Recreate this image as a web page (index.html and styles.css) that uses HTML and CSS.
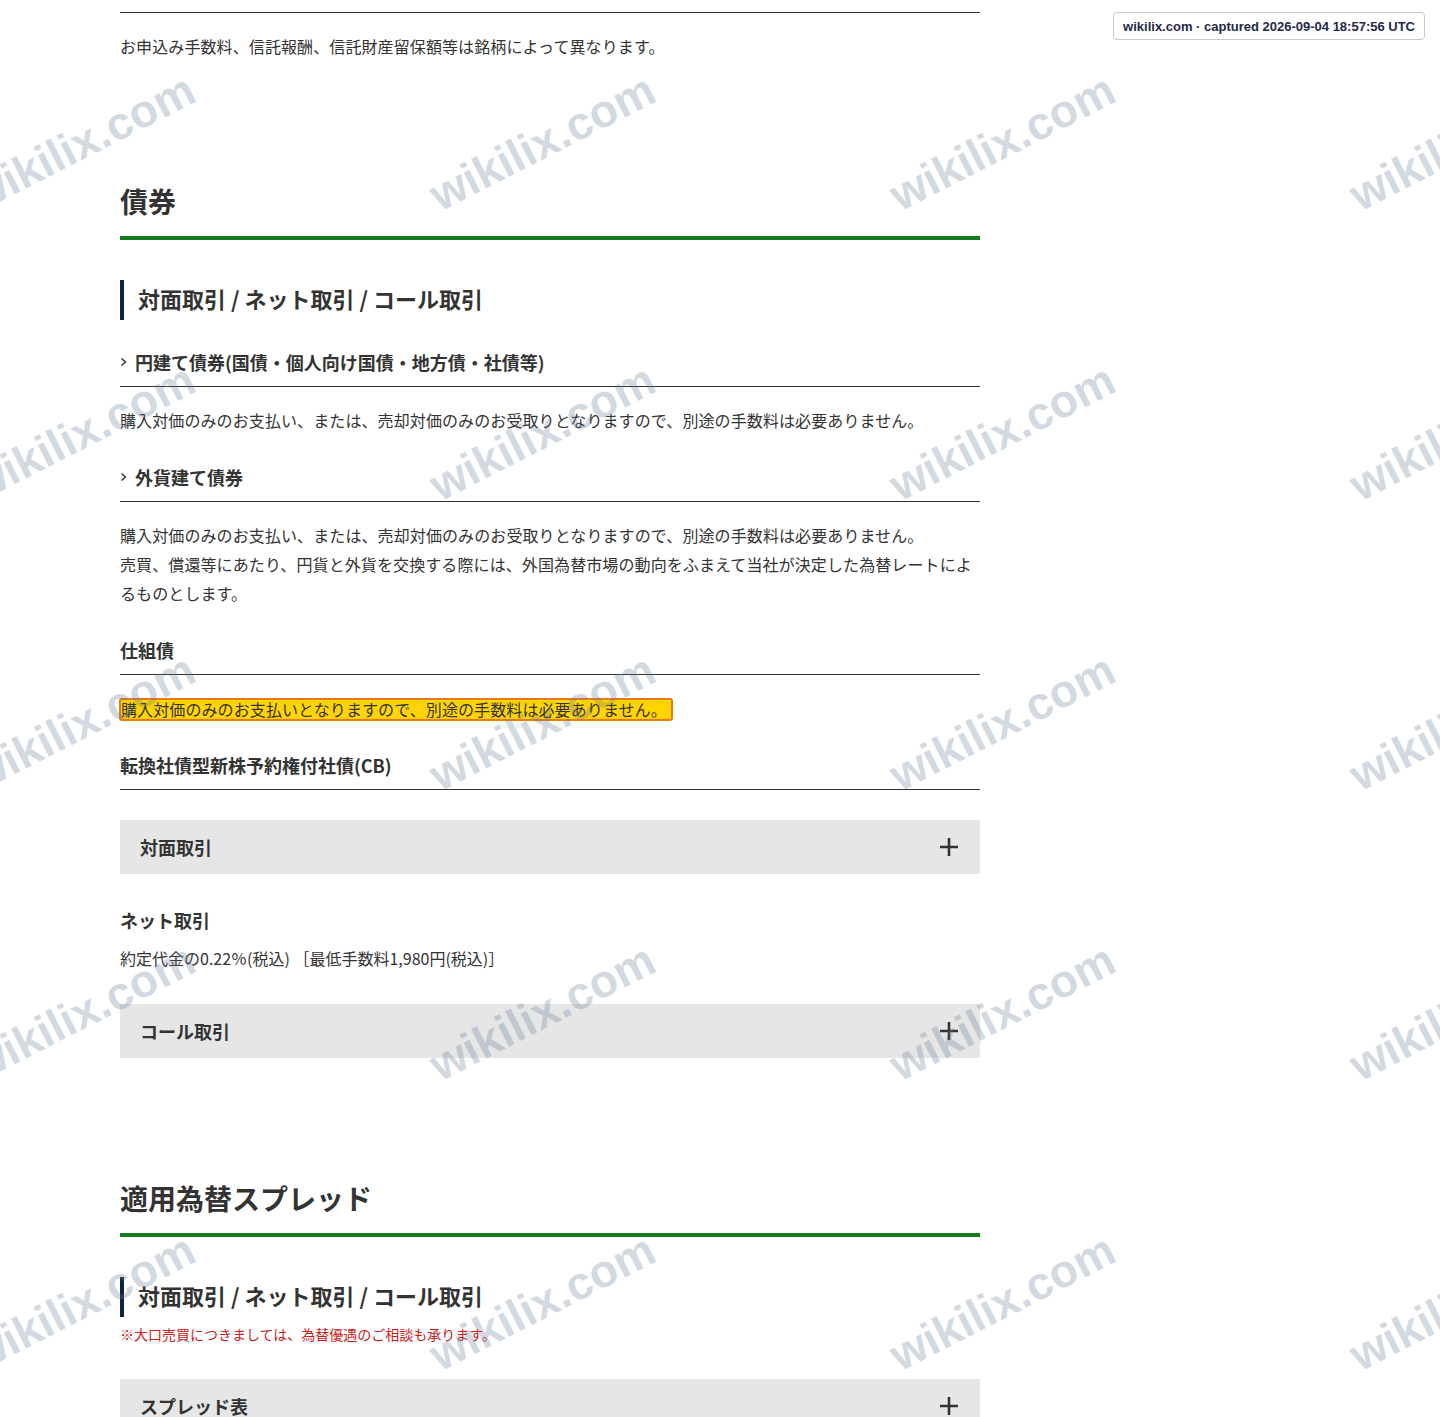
FILE: index.html
```html
<!DOCTYPE html>
<html lang="ja">
<head>
<meta charset="utf-8">
<title>債券 手数料</title>
<link rel="stylesheet" href="styles.css">
</head>
<body>
<main class="page">
  <div class="top-rule"></div>
  <p class="text first">お申込み手数料、信託報酬、信託財産留保額等は銘柄によって異なります。</p>

  <h2 class="sec-title">債券</h2>
  <h3 class="sub-title">対面取引 / ネット取引 / コール取引</h3>

  <h4 class="item-title"><svg class="chev" viewBox="0 0 7 10" width="7" height="10"><path d="M1.5 1.5 L5.5 5 L1.5 8.5" fill="none" stroke="#333" stroke-width="1.4"/></svg>円建て債券(国債・個人向け国債・地方債・社債等)</h4>
  <p class="text">購入対価のみのお支払い、または、売却対価のみのお受取りとなりますので、別途の手数料は必要ありません。</p>

  <h4 class="item-title"><svg class="chev" viewBox="0 0 7 10" width="7" height="10"><path d="M1.5 1.5 L5.5 5 L1.5 8.5" fill="none" stroke="#333" stroke-width="1.4"/></svg>外貨建て債券</h4>
  <p class="text">購入対価のみのお支払い、または、売却対価のみのお受取りとなりますので、別途の手数料は必要ありません。<br>売買、償還等にあたり、円貨と外貨を交換する際には、外国為替市場の動向をふまえて当社が決定した為替レートによるものとします。</p>

  <h4 class="item-title">仕組債</h4>
  <p class="text"><span class="mark">購入対価のみのお支払いとなりますので、別途の手数料は必要ありません。</span></p>

  <h4 class="item-title">転換社債型新株予約権付社債(CB)</h4>

  <div class="accordion first-acc">
    <span class="acc-label">対面取引</span>
    <svg class="plus" viewBox="0 0 20 20" width="20" height="20"><path d="M10 1 V19 M1 10 H19" stroke="#333" stroke-width="2.6" fill="none"/></svg>
  </div>

  <h5 class="plain-title">ネット取引</h5>
  <p class="fee">約定代金の0.22％(税込) ［最低手数料1,980円(税込)］</p>

  <div class="accordion second-acc">
    <span class="acc-label">コール取引</span>
    <svg class="plus" viewBox="0 0 20 20" width="20" height="20"><path d="M10 1 V19 M1 10 H19" stroke="#333" stroke-width="2.6" fill="none"/></svg>
  </div>

  <h2 class="sec-title second-sec">適用為替スプレッド</h2>
  <h3 class="sub-title">対面取引 / ネット取引 / コール取引</h3>
  <p class="note">※大口売買につきましては、為替優遇のご相談も承ります。</p>

  <div class="accordion third-acc">
    <span class="acc-label">スプレッド表</span>
    <svg class="plus" viewBox="0 0 20 20" width="20" height="20"><path d="M10 1 V19 M1 10 H19" stroke="#333" stroke-width="2.6" fill="none"/></svg>
  </div>
</main>

<div class="wm-layer" aria-hidden="true">
  <div class="wm-grid">
    <span class="wm">wikilix.com</span><span class="wm">wikilix.com</span><span class="wm">wikilix.com</span><span class="wm">wikilix.com</span>
    <span class="wm">wikilix.com</span><span class="wm">wikilix.com</span><span class="wm">wikilix.com</span><span class="wm">wikilix.com</span>
    <span class="wm">wikilix.com</span><span class="wm">wikilix.com</span><span class="wm">wikilix.com</span><span class="wm">wikilix.com</span>
    <span class="wm">wikilix.com</span><span class="wm">wikilix.com</span><span class="wm">wikilix.com</span><span class="wm">wikilix.com</span>
    <span class="wm">wikilix.com</span><span class="wm">wikilix.com</span><span class="wm">wikilix.com</span><span class="wm">wikilix.com</span>
  </div>
</div>

<div class="badge">wikilix.com · captured 2026-09-04 18:57:56 UTC</div>
</body>
</html>
```

FILE: styles.css
```css
html, body {
  height: 100%;
}
body {
  margin: 0;
  position: relative;
  overflow: hidden;
  background: #fff;
  color: #333;
  font-family: "Noto Sans CJK JP", "Noto Sans", sans-serif;
}
.page {
  width: 860px;
  margin-left: 120px;
  padding-top: 12px;
}
.top-rule {
  border-top: 1px solid #333;
}
.text {
  margin: 19px 0 0;
  font-size: 16px;
  line-height: 29px;
  letter-spacing: 0.1px;
  color: #333;
}
.sec-title {
  margin: 120px 0 0;
  font-size: 28px;
  line-height: 40px;
  font-weight: 700;
  color: #333;
  padding-bottom: 15px;
  border-bottom: 4px solid #147d1e;
}
.sub-title {
  margin: 40px 0 0;
  font-size: 22px;
  line-height: 37px;
  padding-bottom: 3px;
  font-weight: 700;
  color: #333;
  padding-left: 14px;
  border-left: 4px solid #0d2440;
}
.item-title {
  margin: 28px 0 0;
  font-size: 18px;
  line-height: 28px;
  font-weight: 700;
  color: #333;
  padding-bottom: 10px;
  border-bottom: 1px solid #333;
  display: flex;
  align-items: center;
}
.chev {
  margin-right: 8px;
  flex: none;
}
.mark {
  display: inline-block;
  vertical-align: middle;
  line-height: 19px;
  background: #ffd400;
  border: 2px solid #ea7a14;
  border-radius: 3px;
  margin-left: -1px;
  margin-top: -3px;
  padding: 0 4px 0 0;
}
.accordion {
  height: 54px;
  background: #e6e6e6;
  display: flex;
  align-items: center;
  justify-content: space-between;
  padding: 0 21px 0 20px;
}
.first-acc { margin-top: 30px; }
.second-acc { margin-top: 33px; }
.third-acc { margin-top: 35px; }
.acc-label {
  font-size: 18px;
  font-weight: 700;
  color: #333;
}
.plain-title {
  margin: 32px 0 0;
  font-size: 18px;
  line-height: 28px;
  font-weight: 700;
  color: #333;
}
.fee {
  margin: 11px 0 0;
  font-size: 16px;
  line-height: 26px;
  color: #333;
}
.note {
  margin: 7px 0 0;
  font-size: 14px;
  line-height: 20px;
  color: #cc1b1b;
}
.wm-layer {
  position: absolute;
  inset: 0;
  overflow: hidden;
  pointer-events: none;
}
.wm-grid {
  position: absolute;
  top: -3px;
  left: -148px;
  display: grid;
  grid-template-columns: repeat(4, 460px);
  grid-template-rows: repeat(5, 290px);
}
.wm {
  display: flex;
  align-items: center;
  justify-content: center;
  font-family: "Liberation Sans", Arial, sans-serif;
  font-weight: 700;
  font-size: 46px;
  color: rgba(100, 120, 150, 0.28);
  white-space: nowrap;
  transform: rotate(-27deg);
}
.badge {
  position: absolute;
  top: 12px;
  right: 15px;
  height: 26px;
  padding: 0 9px;
  display: flex;
  align-items: center;
  background: #fff;
  border: 1px solid #c9c9c9;
  border-radius: 4px;
  font-family: "Liberation Sans", Arial, sans-serif;
  font-weight: 700;
  font-size: 13px;
  color: #1e2a48;
}
```
